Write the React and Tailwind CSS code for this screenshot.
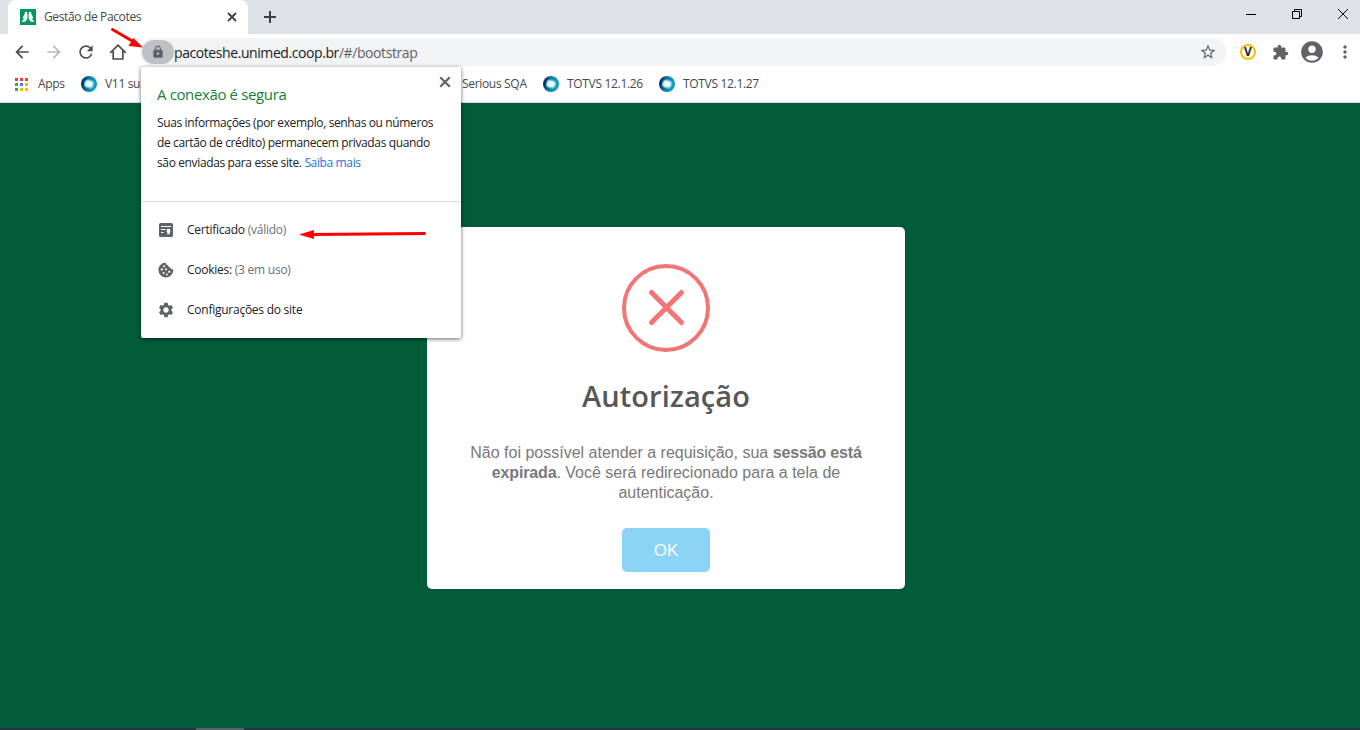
import {
  MdAccountCircle,
  MdArrowBack,
  MdArrowForward,
  MdExtension,
  MdLock,
  MdMoreVert,
  MdRefresh,
  MdSettings,
  MdStarBorder,
} from 'react-icons/md';

const appColors = [
  'bg-[#ea4335]', 'bg-[#ea4335]', 'bg-[#ea4335]',
  'bg-[#34a853]', 'bg-[#4285f4]', 'bg-[#fbbc04]',
  'bg-[#34a853]', 'bg-[#fbbc04]', 'bg-[#fbbc04]',
];

function UnimedIcon() {
  return (
    <svg width="16" height="16" viewBox="0 0 16 16">
      <rect width="16" height="16" fill="#00995d" />
      <circle cx="6" cy="4" r="1.3" fill="#fff" />
      <circle cx="10" cy="4" r="1.3" fill="#fff" />
      <path d="M4.6 5h2.8v4.4L5.200 12.800H1.700L4.400 9 2.400 9.600zM11.400 5H8.600v4.400l2.200 3.400h3.500L11.600 9l2 .6z" fill="#fff" />
    </svg>
  );
}

function TotvsIcon() {
  return (
    <svg width="16" height="16" viewBox="0 0 16 16" className="shrink-0">
      <defs>
        <linearGradient id="totvs" x1="0" y1="0.4" x2="1" y2="0.6">
          <stop offset="0.05" stopColor="#0b2a62" />
          <stop offset="0.5" stopColor="#1285ae" />
          <stop offset="1" stopColor="#12a3b8" />
        </linearGradient>
      </defs>
      <circle cx="8" cy="8" r="8" fill="url(#totvs)" />
      <rect x="3.2" y="3.8" width="9.800" height="8.400" rx="3.400" fill="#6cc9e0" transform="rotate(14 8 8)" />
      <rect x="4.400" y="5" width="7.200" height="5.800" rx="2.400" fill="#eef9fc" transform="rotate(14 8 8)" />
    </svg>
  );
}

function HomeIcon() {
  return (
    <svg width="20" height="20" viewBox="0 0 20 20" fill="none" stroke="#4a4d51" strokeWidth="1.7">
      <path d="M2.300 10.800 10 3.200l7.700 7.600M5.200 9v8h9.600V9" />
    </svg>
  );
}

function CloseIcon({ size, className }) {
  return (
    <svg width={size} height={size} viewBox="0 0 10 10" className={className}>
      <path d="M1 1l8 8M9 1L1 9" stroke="currentColor" strokeWidth="1.800" />
    </svg>
  );
}

function CertificateIcon() {
  return (
    <svg width="16" height="16" viewBox="0 0 16 16" className="shrink-0">
      <rect x="1" y="1" width="14" height="14" rx="1.500" fill="#5f6368" />
      <path d="M3 4.500h10M3 7.500h4.500M3 10.500h2.500" stroke="#fff" strokeWidth="1.100" />
      <circle cx="10.500" cy="8.800" r="2" fill="#fff" />
      <path d="M9.400 9.800h2.200v3l-1.100-.8-1.100.8z" fill="#fff" />
    </svg>
  );
}

function CookieIcon() {
  return (
    <svg width="16" height="16" viewBox="0 0 16 16" className="shrink-0">
      <path d="M7.500.5c.3 1.700 1 2.600 2.500 2.600.2 1.600 1 2.400 2.300 2.500.2 1.300 1.200 2 3.100 2A7.500 7.500 0 1 1 7.500.5z" fill="#5f6368" />
      <g fill="#fff">
        <circle cx="6" cy="4.300" r="1" />
        <circle cx="3.800" cy="7.400" r="1.100" />
        <circle cx="8" cy="7.300" r="1.100" />
        <circle cx="5.700" cy="11" r="1" />
        <circle cx="9" cy="12.500" r=".9" />
        <circle cx="11.200" cy="9.800" r="1.100" />
      </g>
    </svg>
  );
}

function TabStrip() {
  return (
    <div className="flex h-[34px] justify-between bg-[#dee1e6] pl-2">
      <div className="flex">
        <div className="flex h-full w-[240px] items-center rounded-t-lg bg-white pl-3 pr-2">
          <UnimedIcon />
          <span className="ml-2 flex-1 text-[12px] tracking-[-0.36px] text-[#45484c]">Gestão de Pacotes</span>
          <CloseIcon size={10} className="mr-[3px] text-[#3c4043]" />
        </div>
        <svg width="12" height="12" viewBox="0 0 12 12" className="ml-4 mt-[11px]">
          <path d="M6 0v12M0 6h12" stroke="#3c4043" strokeWidth="2" />
        </svg>
      </div>
      <div className="flex gap-9 pr-3 pt-[9px] text-black">
        <svg width="10" height="10"><path d="M0 5.500h10" stroke="currentColor" /></svg>
        <svg width="10" height="10" fill="none" stroke="currentColor">
          <path d="M.5 2.500h7v7h-7zM2.500 2.500v-2h7v7h-2" />
        </svg>
        <svg width="10" height="10"><path d="M0 0l10 10M10 0L0 10" stroke="currentColor" /></svg>
      </div>
    </div>
  );
}

function Toolbar() {
  return (
    <div className="flex h-9 items-center bg-white pl-3 text-[#5f6368]">
      <div className="flex w-32 gap-3">
        <MdArrowBack size={20} color="#4a4d51" />
        <MdArrowForward size={20} color="#b8babd" />
        <MdRefresh size={20} color="#4a4d51" />
        <HomeIcon />
      </div>
      <div className="flex h-7 w-[1086px] items-center rounded-full bg-[#f1f3f4] pl-0.5 pr-[9px]">
        <div className="flex h-6 w-8 items-center justify-center rounded-full bg-[#bdc1c4]">
          <MdLock size={14} />
        </div>
        <span className="flex-1 text-[14px] tracking-[-0.42px] text-[#202124]">
          pacoteshe.unimed.coop.br<span className="text-[#5f6368]">/#/bootstrap</span>
        </span>
        <MdStarBorder size={18} />
      </div>
      <div className="ml-3.5 flex size-4 items-center justify-center rounded-full border-2 border-[#fbbc14] text-[12px] font-bold text-[#202124]">V</div>
      <MdExtension size={17} className="ml-4" />
      <MdAccountCircle size={26} className="ml-2.5" />
      <MdMoreVert size={20} className="ml-2.5" />
    </div>
  );
}

function Bookmark({ label, className }) {
  return (
    <div className={`flex items-center gap-2 ${className}`}>
      <TotvsIcon />
      <span>{label}</span>
    </div>
  );
}

function BookmarksBar() {
  return (
    <div className="flex h-[33px] items-center border-b border-[#d5d8da] bg-white pb-1 pl-[15px] text-[12px] tracking-[-0.32px] text-[#45484c]">
      <div className="grid grid-cols-3 gap-[2px]">
        {appColors.map((color, i) => (
          <span key={i} className={`size-[3px] ${color}`} />
        ))}
      </div>
      <span className="ml-2.5 w-[43px]">Apps</span>
      <Bookmark label="V11 suporte" className="w-[381px]" />
      <span className="w-[81px]">Serious SQA</span>
      <Bookmark label="TOTVS 12.1.26" className="w-[116px]" />
      <Bookmark label="TOTVS 12.1.27" />
    </div>
  );
}

function SiteInfoRow({ icon, label, detail }) {
  return (
    <div className="flex h-10 items-center gap-[13px] pl-[17px]">
      {icon}
      <span>
        {label} <span className="text-[#6b6e72]">{detail}</span>
      </span>
    </div>
  );
}

function SiteInfoPopup() {
  return (
    <div className="absolute left-[141px] top-[67px] h-[271px] w-80 rounded-[2px] bg-white text-[12px] tracking-[-0.25px] text-[#202124] shadow-[0_1px_4px_rgba(0,0,0,0.6)]">
      <CloseIcon size={12} className="absolute right-2.5 top-[9px] text-[#5f6368]" />
      <div className="h-[135px] border-b border-[#dadce0] pl-4 pt-4">
        <h2 className="text-[15px] leading-[22px] tracking-[-0.37px] text-[#188038]">A conexão é segura</h2>
        <p className="mt-2 whitespace-nowrap leading-5 tracking-[-0.37px]">
          Suas informações (por exemplo, senhas ou números
          <br />
          de cartão de crédito) permanecem privadas quando
          <br />
          são enviadas para esse site. <a className="text-[#1a73e8]">Saiba mais</a>
        </p>
      </div>
      <div className="pt-2">
        <SiteInfoRow icon={<CertificateIcon />} label="Certificado" detail="(válido)" />
        <SiteInfoRow icon={<CookieIcon />} label="Cookies:" detail="(3 em uso)" />
        <SiteInfoRow icon={<MdSettings size={18} color="#5f6368" className="-mx-px" />} label="Configurações do site" />
      </div>
    </div>
  );
}

function ErrorDialog() {
  return (
    <div className="flex h-[362px] w-[478px] flex-col items-center rounded-[5px] bg-white pt-[37px] text-center font-['Liberation_Sans',sans-serif]">
      <svg width="88" height="88" viewBox="0 0 88 88" fill="none" stroke="#f27474">
        <circle cx="44" cy="44" r="42" strokeWidth="4" />
        <path d="M29.500 28.500 59.500 58.500M59.500 28.500 29.500 58.500" strokeWidth="5" strokeLinecap="round" />
      </svg>
      <h1 className="mt-6 font-['Open_Sans',sans-serif] text-[29px] font-semibold leading-10 tracking-[0.1px] text-[#575757]">Autorização</h1>
      <p className="mt-[27px] whitespace-nowrap text-[16px] leading-5 text-[#797979]">
        Não foi possível atender a requisição, sua <b className="tracking-[-0.15px]">sessão está</b>
        <br />
        <b className="tracking-[-0.15px]">expirada</b>. Você será redirecionado para a tela de
        <br />
        autenticação.
      </p>
      <button className="mt-[25px] h-11 w-[88px] rounded-[5px] bg-[#8cd4f5] pt-0.5 text-[17px] text-white">OK</button>
    </div>
  );
}

// Red arrows drawn over the window
function Annotations() {
  return (
    <svg width="1360" height="730" className="pointer-events-none absolute left-0 top-0" fill="#f00" stroke="#f00">
      <path d="M112.500 29.500 134 42" strokeWidth="3" strokeLinecap="round" />
      <path d="M143 47.500 128.500 46 133.500 38z" stroke="none" />
      <path d="M424.500 233.500 312 234.500" strokeWidth="3" strokeLinecap="round" />
      <path d="M299 234.500 314 230V239z" stroke="none" />
    </svg>
  );
}

export default function App() {
  return (
    <div className="relative flex h-[730px] w-[1360px] flex-col overflow-hidden font-['Open_Sans','Noto_Sans',sans-serif]">
      <TabStrip />
      <Toolbar />
      <BookmarksBar />
      <main className="flex flex-1 items-start bg-[#005c38] pl-[427px] pt-[124px]">
        <ErrorDialog />
      </main>
      <div className="h-0.5 bg-[#2b3340] pl-[196px]">
        <div className="h-full w-12 bg-[#5c6069]" />
      </div>
      <SiteInfoPopup />
      <Annotations />
    </div>
  );
}
